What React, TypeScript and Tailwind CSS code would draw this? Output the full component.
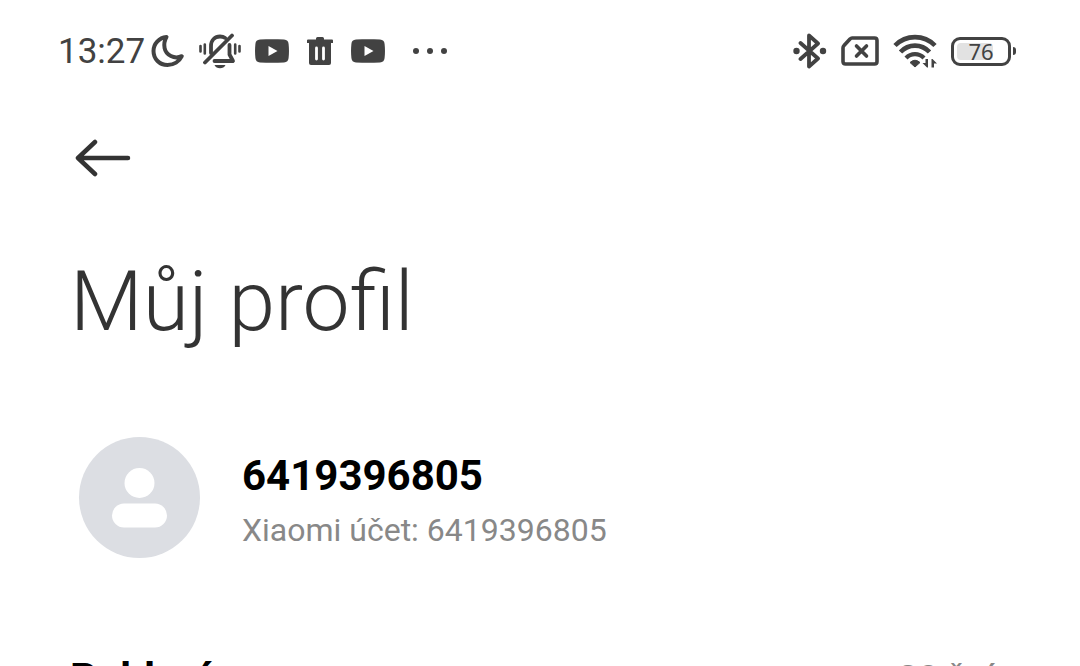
import React from 'react';

const ink = '#424242';

const rows = [
  { id: 'gender', label: 'Pohlaví', value: '28 žní' },
];

function MoonIcon() {
  return (
    <svg className="h-[34px] w-[34px]" viewBox="0 0 34 34" fill="none" aria-hidden="true">
      <path
        d="M15.500 3C8 3.700 2.500 9.800 2.500 17c0 8 6 14 14 14 6.200 0 11.800-3.400 14.300-8.800-7.600 3.300-15.800-1-17.200-8-.8-4 0-8 1.900-11.200Z"
        stroke={ink}
        strokeWidth="4"
        strokeLinejoin="round"
      />
    </svg>
  );
}

function MutedBellIcon() {
  return (
    <svg className="h-9 w-[42px]" viewBox="0 0 42 36" fill="none" stroke={ink} strokeLinecap="round" aria-hidden="true">
      <path d="M1.500 13v5.500M5.800 11.500v9M36.200 11.500v9M40.500 13v5.500" strokeWidth="2.600" />
      <path d="M12 20v-7c0-6 4-9.500 9-9.500 2 0 3.800.5 5.200 1.500" strokeWidth="3.800" />
      <path d="M30.500 12v9.500l3.500 6.500H15.500" strokeWidth="3.800" strokeLinejoin="round" />
      <path d="M33 2.500L6 29.500" strokeWidth="3.800" />
      <path d="M15.500 32h11c-1 2.200-3 3.200-5.500 3.200s-4.500-1-5.500-3.200Z" fill={ink} stroke="none" />
    </svg>
  );
}

function PlayIcon() {
  return (
    <svg className="h-6 w-[34px]" viewBox="0 0 34 24" aria-hidden="true">
      <path
        d="M5 .6C13 0 21 0 29 .6c3 .2 4.300 1.600 4.600 4.400.5 4.700.5 9.300 0 14-.3 2.800-1.600 4.200-4.600 4.400-8 .6-16 .6-24 0-3-.2-4.300-1.600-4.600-4.400-.5-4.700-.5-9.300 0-14C.7 2.200 2 .8 5 .6Z"
        fill={ink}
      />
      <path d="M13.500 7v10l9-5Z" fill="#fff" />
    </svg>
  );
}

function TrashIcon() {
  return (
    <svg className="h-7 w-[26px]" viewBox="0 0 26 28" fill={ink} aria-hidden="true">
      <path d="M1 2.500h8V1.500Q9 0 10.500 0h5Q17 0 17 1.500v1h8q1 0 1 1V6H0V3.500q0-1 1-1Z" />
      <path d="M2 6h22v20q0 2-2 2H4q-2 0-2-2Z" />
      <path d="M9.500 11v11M16.500 11v11" stroke="#fff" strokeWidth="2.800" strokeLinecap="round" />
    </svg>
  );
}

function MoreIcon() {
  return (
    <svg className="h-2 w-[36px]" viewBox="0 0 36 8" fill={ink} aria-hidden="true">
      <circle cx="4" cy="4" r="3" />
      <circle cx="18" cy="4" r="3" />
      <circle cx="32" cy="4" r="3" />
    </svg>
  );
}

function BluetoothIcon() {
  return (
    <svg className="h-9 w-[34px]" viewBox="0 0 34 36" fill="none" aria-hidden="true">
      <path
        d="M7.500 10L25 25.500L16 33.500V2.500L25 10.500L7.500 26"
        stroke={ink}
        strokeWidth="3.800"
        strokeLinecap="round"
        strokeLinejoin="round"
      />
      <circle cx="3.500" cy="18" r="3.200" fill={ink} />
      <circle cx="30" cy="18" r="3.200" fill={ink} />
    </svg>
  );
}

function NoSimIcon() {
  return (
    <svg className="h-[30px] w-[38px]" viewBox="0 0 38 30" fill="none" stroke={ink} aria-hidden="true">
      <path
        d="M11 2h22.500q2.500 0 2.500 2.500v21q0 2.500-2.500 2.500h-29Q2 28 2 25.500V12q0-1.500 1-2.500L9 3q1-1 2-1Z"
        strokeWidth="3.600"
        strokeLinejoin="round"
      />
      <path d="M15.500 10l10 10M25.500 10l-10 10" strokeWidth="3.600" strokeLinecap="round" />
    </svg>
  );
}

function WifiIcon() {
  return (
    <svg className="h-[34px] w-[44px]" viewBox="0 0 44 34" fill="none" stroke={ink} aria-hidden="true">
      <path d="M2 11.500C13 .3 31 .3 42 11.500" strokeWidth="4.600" />
      <path d="M7.500 18c8-8.500 21-8.500 29 0" strokeWidth="4.600" />
      <path d="M13 24c5-5.300 13-5.300 18 0" strokeWidth="4.200" />
      <path d="M17 28.500q5-4.500 10 0L22 33Z" fill={ink} stroke={ink} strokeLinejoin="round" />
      <path d="M35 25v8.500h-1l-4.500-4.500h3v-4ZM38.500 33.500V25h1l4.500 4.500h-3v4Z" fill={ink} stroke="none" />
    </svg>
  );
}

function Battery({ level }: { level: number }) {
  return (
    <div className="flex items-center gap-0.5">
      <div className="h-[29px] w-[60px] rounded-[9px] border-3 border-[#424242] p-[3px]">
        <div className="relative flex h-full items-center justify-center">
          <div className="absolute inset-y-0 left-0 rounded-sm bg-[#e2e2e2]" style={{ width: `${level}%` }} />
          <span className="relative font-['Noto_Sans',sans-serif] text-[22px] leading-none">{level}</span>
        </div>
      </div>
      <div className="h-2 w-[3px] rounded-r-sm bg-[#424242]" />
    </div>
  );
}

function StatusBar() {
  return (
    <div className="flex h-[102px] items-center justify-between pr-16 pl-[58px] text-[#424242]">
      <div className="flex items-center">
        <span className="text-[35px] leading-none">13:27</span>
        <div className="ml-1.5 flex items-center gap-[14px]">
          <MoonIcon />
          <MutedBellIcon />
          <PlayIcon />
        </div>
        <div className="ml-[18px] flex items-center gap-[18px]">
          <TrashIcon />
          <PlayIcon />
        </div>
        <div className="ml-[27px]">
          <MoreIcon />
        </div>
      </div>
      <div className="flex items-center gap-[14px]">
        <BluetoothIcon />
        <NoSimIcon />
        <WifiIcon />
        <Battery level={76} />
      </div>
    </div>
  );
}

function Avatar() {
  return (
    <svg className="size-[122px] shrink-0" viewBox="0 0 122 122" aria-hidden="true">
      <circle cx="61.500" cy="61.500" r="60.500" fill="#dcdee3" />
      <circle cx="61.500" cy="47" r="15" fill="#fff" />
      <rect x="34" y="67.500" width="55" height="24" rx="12" fill="#fff" />
    </svg>
  );
}

export default function App() {
  return (
    <div className="h-screen overflow-hidden bg-white font-[Roboto,sans-serif]">
      <StatusBar />
      <main className="pl-[70px]">
        <button type="button" aria-label="Zpět" className="mt-9 block pl-[5px]">
          <svg className="h-10 w-14" viewBox="0 0 56 40" fill="none" aria-hidden="true">
            <path
              d="M20 4L3 20l17 16M3 20h50"
              stroke="#333"
              strokeWidth="4.500"
              strokeLinecap="round"
              strokeLinejoin="round"
            />
          </svg>
        </button>

        <h1 className="mt-[68px] text-[84px] leading-[112px] font-light text-[#333]">Můj profil</h1>

        <section className="mt-[78px] flex items-center gap-[42px] pl-2">
          <Avatar />
          <div className="pt-[10px]">
            <p className="text-[42px] leading-[56px] font-bold text-black">6419396805</p>
            <p className="text-[32px] leading-[52px] text-[#888]">Xiaomi účet: 6419396805</p>
          </div>
        </section>

        <ul className="mt-[93px] pr-[86px]">
          {rows.map((row) => (
            <li key={row.id} className="flex items-center justify-between">
              <span className="text-[42px] leading-[56px] font-bold text-black">{row.label}</span>
              <span className="text-[36px] leading-[56px] text-[#888]">{row.value}</span>
            </li>
          ))}
        </ul>
      </main>
    </div>
  );
}
